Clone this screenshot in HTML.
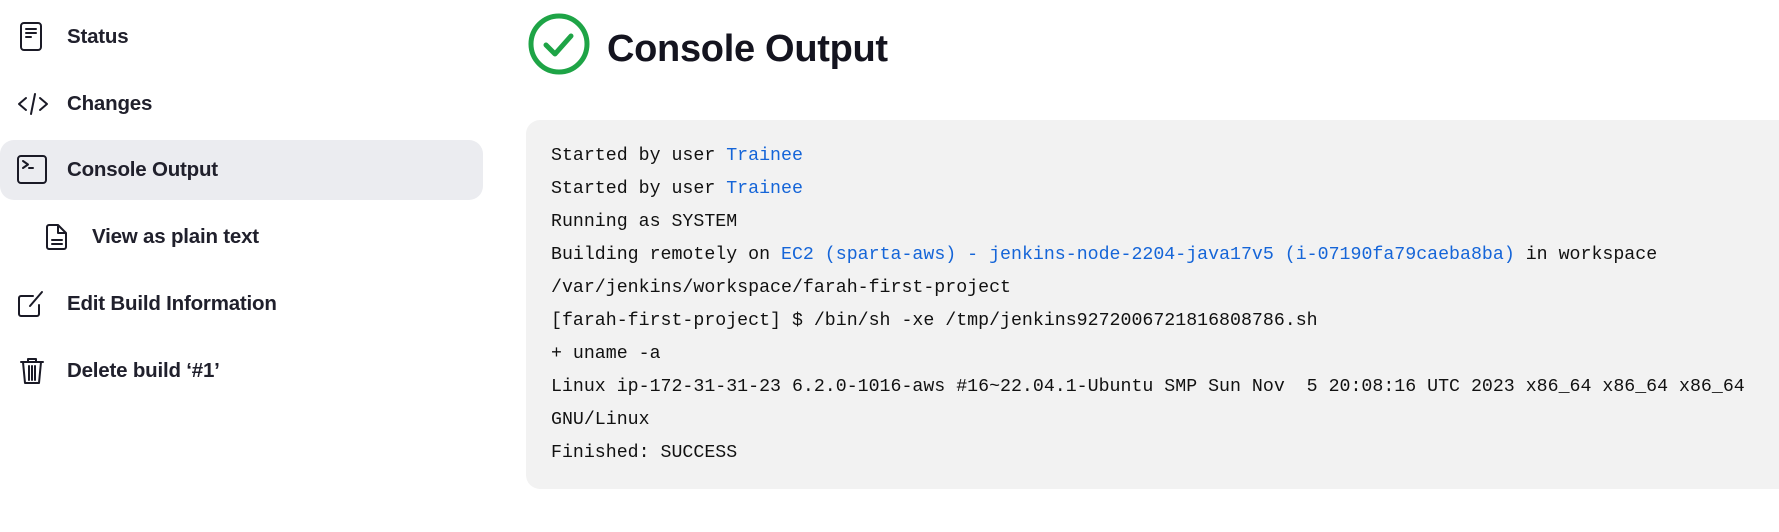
<!DOCTYPE html>
<html><head><meta charset="utf-8"><style>
html,body{margin:0;padding:0;background:#fff;width:1779px;height:532px;overflow:hidden;font-family:"Liberation Sans",sans-serif;color:#14141f}
.item{position:absolute;left:0;height:60px;width:483px;display:flex;align-items:center;font-size:20.5px;font-weight:bold;color:#20202c}
.item svg{position:absolute;left:16px;top:15px}
.item span{position:absolute;left:67px;letter-spacing:-0.2px}
.active{background:#ebecf0;border-radius:14px}
.title{position:absolute;left:607px;top:28px;font-size:38px;font-weight:bold;color:#14141f;letter-spacing:-0.3px}
.box{position:absolute;left:526px;top:120px;width:1280px;height:369px;background:#f2f2f2;border-radius:14px}
pre{position:absolute;left:551px;top:140px;margin:0;font-family:"Liberation Mono",monospace;font-size:18.25px;line-height:33px;color:#111}
a{color:#1565d8;text-decoration:none}
</style></head><body>
<div class="item" style="top:7px"><svg width="30" height="30" viewBox="0 0 30 30" fill="none" stroke="#1a1a26" stroke-width="2" stroke-linecap="round"><rect x="5" y="1" width="20" height="27" rx="3"/><path d="M10 7h10M10 11h10M10 15h5"/></svg><span>Status</span></div>
<div class="item" style="top:74px"><svg width="34" height="30" viewBox="0 0 34 30" fill="none" stroke="#1a1a26" stroke-width="2" stroke-linecap="round" stroke-linejoin="round"><path d="M10 9L3 15l7 6M24 9l7 6-7 6M19 5l-4 20"/></svg><span>Changes</span></div>
<div class="item active" style="top:140px"><svg width="34" height="30" viewBox="0 0 34 30" fill="none" stroke="#1a1a26" stroke-width="2" stroke-linecap="round" stroke-linejoin="round"><rect x="2" y="1" width="28" height="27" rx="3"/><path d="M7 6l5 3.5-5 3.5M13 13h4"/></svg><span>Console Output</span></div>
<div class="item" style="top:207px"><svg style="left:43px" width="30" height="30" viewBox="0 0 30 30" fill="none" stroke="#1a1a26" stroke-width="2" stroke-linecap="round" stroke-linejoin="round"><path d="M6 3h9l8 8v14a2 2 0 0 1-2 2H6a2 2 0 0 1-2-2V5a2 2 0 0 1 2-2zM15 3v8h8M9 18h10M9 22h10"/></svg><span style="left:92px">View as plain text</span></div>
<div class="item" style="top:274px"><svg width="34" height="30" viewBox="0 0 34 30" fill="none" stroke="#1a1a26" stroke-width="2" stroke-linecap="round" stroke-linejoin="round"><path d="M17 7H5a2 2 0 0 0-2 2v16a2 2 0 0 0 2 2h16a2 2 0 0 0 2-2v-9M14 17l12-14"/></svg><span>Edit Build Information</span></div>
<div class="item" style="top:341px"><svg width="34" height="32" viewBox="0 0 34 32" fill="none" stroke="#1a1a26" stroke-width="2" stroke-linecap="round" stroke-linejoin="round"><path d="M5 6h22M12 6V3h8v3M7 6l2 21h14l2-21M13 10v14M16 10v14M19 10v14"/></svg><span>Delete build ‘#1’</span></div>
<svg style="position:absolute;left:527px;top:12px" width="64" height="64" viewBox="0 0 64 64" fill="none" stroke="#1ea446" stroke-width="5" stroke-linecap="round" stroke-linejoin="round"><circle cx="32" cy="32" r="28"/><path d="M19 33l9 9 16-18"/></svg>
<div class="title">Console Output</div>
<div class="box"></div>
<pre>Started by user <a>Trainee</a>
Started by user <a>Trainee</a>
Running as SYSTEM
Building remotely on <a>EC2 (sparta-aws) - jenkins-node-2204-java17v5 (i-07190fa79caeba8ba)</a> in workspace
/var/jenkins/workspace/farah-first-project
[farah-first-project] $ /bin/sh -xe /tmp/jenkins9272006721816808786.sh
+ uname -a
Linux ip-172-31-31-23 6.2.0-1016-aws #16~22.04.1-Ubuntu SMP Sun Nov  5 20:08:16 UTC 2023 x86_64 x86_64 x86_64
GNU/Linux
Finished: SUCCESS</pre>
</body></html>
